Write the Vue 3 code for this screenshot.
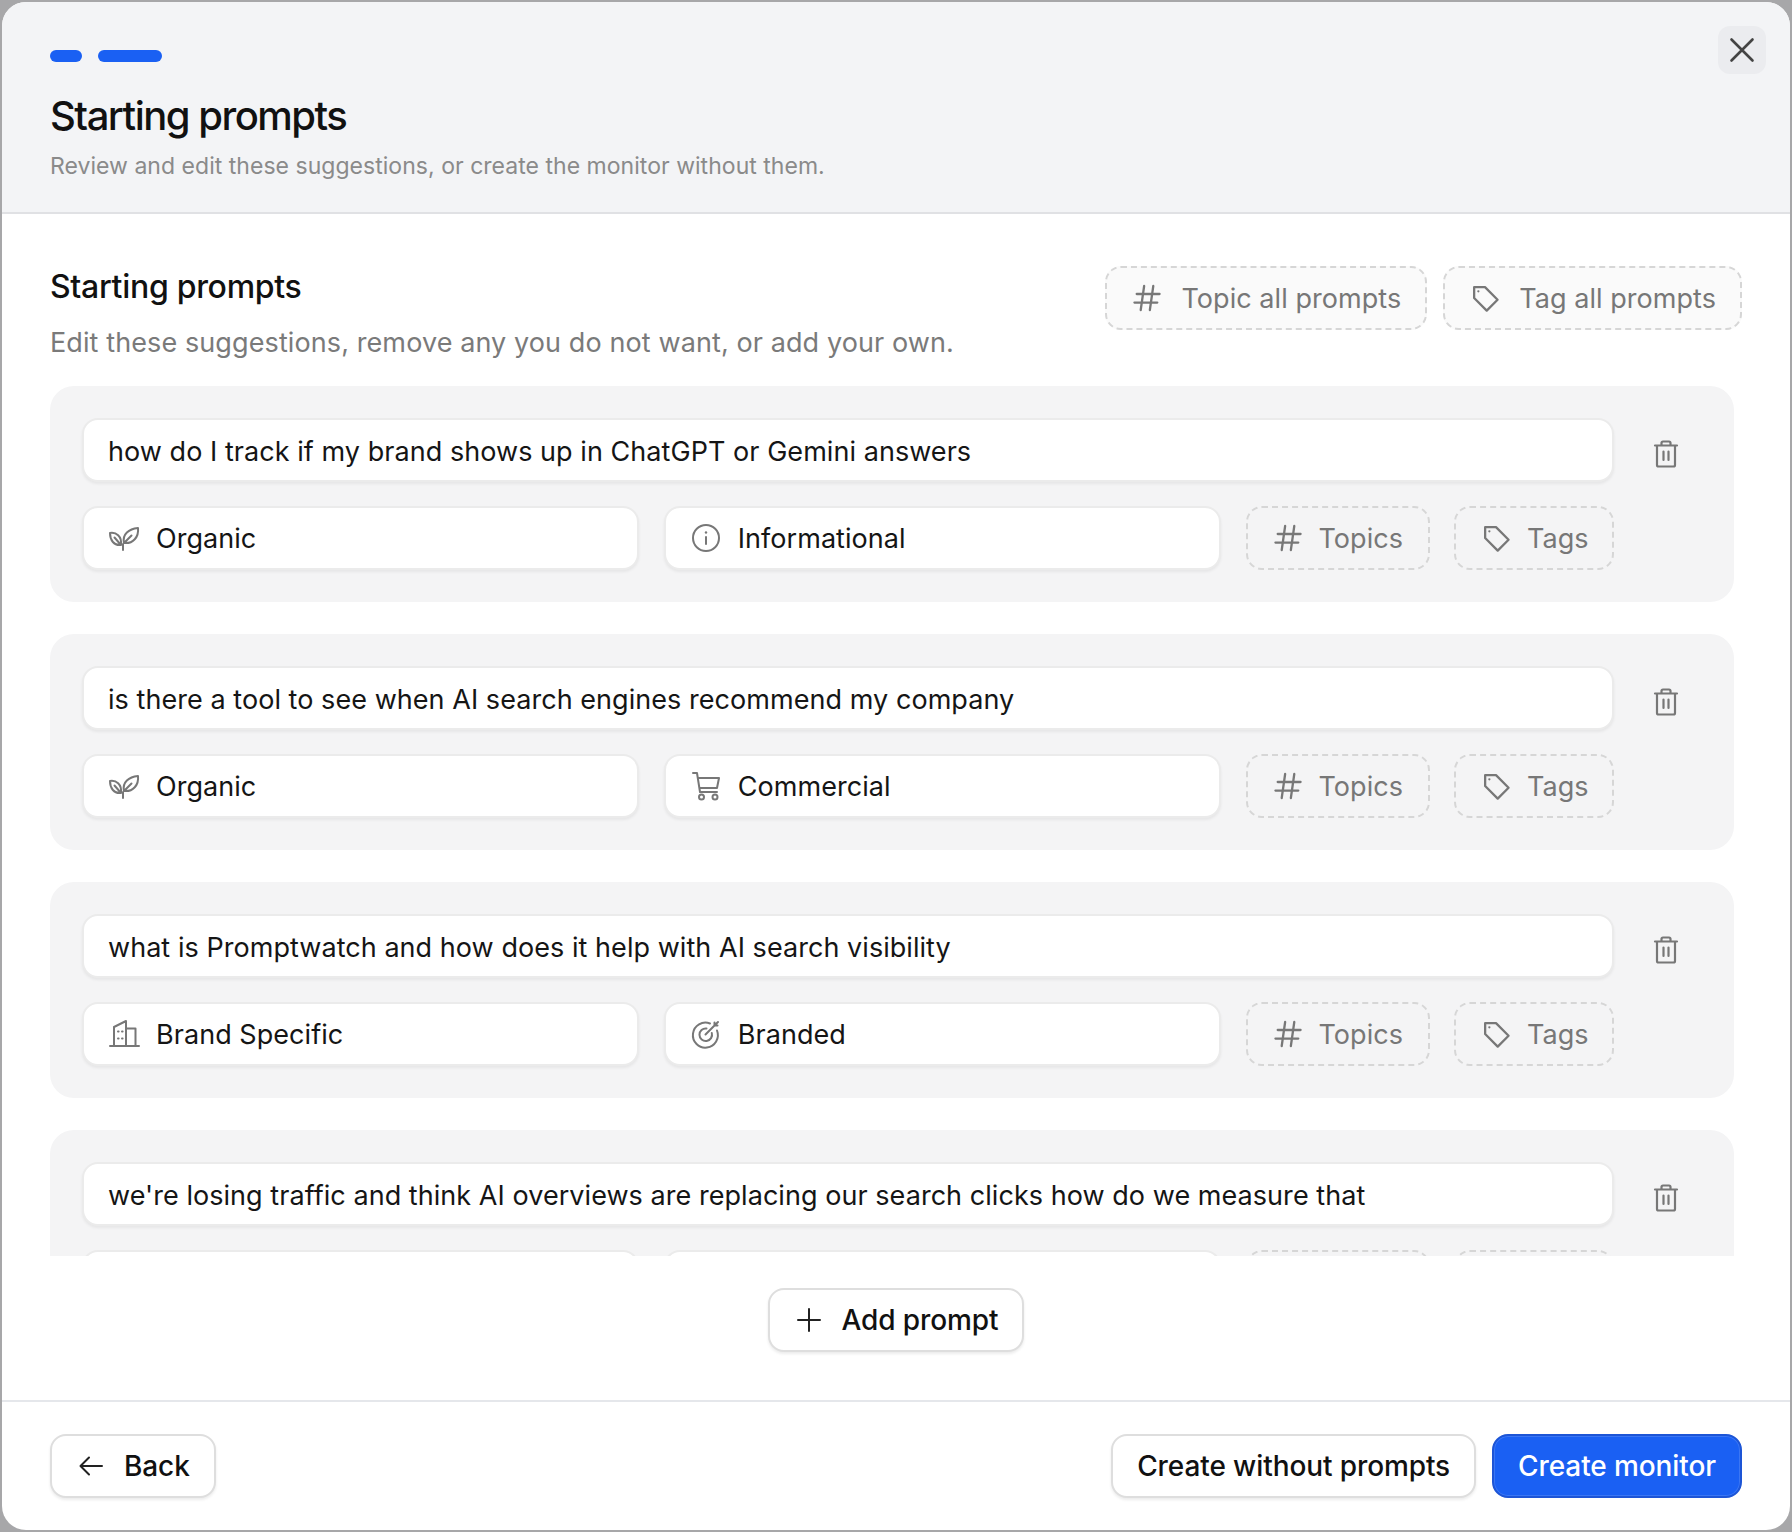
<template>
  <div class="modal">
    <header class="head">
      <div class="steps">
        <span class="step step-short"></span>
        <span class="step step-long"></span>
      </div>
      <h1 class="title">Starting prompts</h1>
      <p class="subtitle">Review and edit these suggestions, or create the monitor without them.</p>
      <button class="close">
        <svg width="26" height="26" viewBox="0 0 26 26" fill="none" stroke="#444" stroke-width="2.6" stroke-linecap="round">
          <path d="M2.500 2.500l21 21M23.500 2.500l-21 21" />
        </svg>
      </button>
    </header>

    <main class="body">
      <div class="section-head">
        <div>
          <h2 class="section-title">Starting prompts</h2>
          <p class="section-sub">Edit these suggestions, remove any you do not want, or add your own.</p>
        </div>
        <div class="section-actions">
          <button class="dashed dashed-light">
            <svg class="ico" viewBox="0 0 28 28"><path :d="hashPath" /></svg>
            Topic all prompts
          </button>
          <button class="dashed dashed-light">
            <svg class="ico" viewBox="0 0 28 28"><path :d="tagPath" /><circle cx="8.200" cy="8.200" r="1" fill="#777" stroke="none" /></svg>
            Tag all prompts
          </button>
        </div>
      </div>

      <div class="list">
        <div v-for="p in prompts" :key="p.text" class="card">
          <div class="row">
            <div class="field prompt">{{ p.text }}</div>
            <button class="trash">
              <svg width="28" height="30" viewBox="0 0 28 30" fill="none" stroke="#777" stroke-width="2.2" stroke-linejoin="round" stroke-linecap="round">
                <path d="M3 6.500h22M5 6.500v19.500a1.500 1.500 0 0 0 1.500 1.500h15a1.500 1.500 0 0 0 1.500-1.500V6.500M9.500 6.500V4a1.500 1.500 0 0 1 1.500-1.500h6A1.500 1.500 0 0 1 18.500 4v2.500M11.500 12.500v8.500M16.500 12.500v8.500" />
              </svg>
            </button>
          </div>
          <!-- fourth card is cut off by the scroll area, only the tops of its boxes show -->
          <div class="row-two">
            <div class="field select">
              <template v-if="p.source">
                <svg class="ico" viewBox="0 0 32 32">
                  <path v-if="p.source === 'Organic'" d="M16 21C14 12 21 7 30 6C31 15 25 22 16 21zM16 21L23.500 13.500M13 23C6 24 2 18 2 11C8 10 14 14 13 23zM6.500 15.500L13 23M15 28V22" />
                  <path v-else d="M2 28h29M6 28V9L18 3V28M18 10.500H27.500V28M10 13.500h.6M14 13.500h.6M10 20.500h.6M14 20.500h.6" />
                </svg>
                {{ p.source }}
              </template>
            </div>
            <div class="field select">
              <template v-if="p.intent">
                <svg class="ico" viewBox="0 0 32 32">
                  <template v-if="p.intent === 'Informational'">
                    <circle cx="16" cy="16" r="13" /><path d="M16 15v7" /><circle cx="16" cy="10.500" r="1.200" fill="#777" stroke="none" />
                  </template>
                  <template v-else-if="p.intent === 'Commercial'">
                    <path d="M3 3H7L10 22H27M8 8H29L27 18H9.500" /><circle cx="11.500" cy="27" r="2.500" /><circle cx="25" cy="27" r="2.500" />
                  </template>
                  <path v-else d="M27 12.500A12.500 12.500 0 1 1 20 5.500M21.800 15A6.300 6.300 0 1 1 16.500 10.500M15.500 16.500L28 4M24.500 4.500V7.500H27.500" />
                </svg>
                {{ p.intent }}
              </template>
            </div>
            <button class="dashed topics">
              <template v-if="p.source">
                <svg class="ico" viewBox="0 0 28 28"><path :d="hashPath" /></svg>
                Topics
              </template>
            </button>
            <button class="dashed tags">
              <template v-if="p.source">
                <svg class="ico" viewBox="0 0 28 28"><path :d="tagPath" /><circle cx="8.200" cy="8.200" r="1" fill="#777" stroke="none" /></svg>
                Tags
              </template>
            </button>
          </div>
        </div>
      </div>

      <div class="add-row">
        <button class="btn">
          <svg class="ico ico-dark" viewBox="0 0 28 28"><path d="M14 3v22M3 14h22" /></svg>
          Add prompt
        </button>
      </div>
    </main>

    <footer class="foot">
      <button class="btn">
        <svg class="ico ico-dark" viewBox="0 0 28 28"><path d="M25 14H4M12 5.500L3.500 14l8.500 8.500" /></svg>
        Back
      </button>
      <div class="foot-right">
        <button class="btn">Create without prompts</button>
        <button class="btn btn-primary">Create monitor</button>
      </div>
    </footer>
  </div>
</template>

<script setup>
const tagPath = 'M4.500 4.500h9.500L25 15.500 15.500 25 4.500 14z'
const hashPath = 'M5 10.500h20M3 18h20M11.500 3.500L8.500 24.500M19.500 3.500l-3 21'

const prompts = [
  { text: 'how do I track if my brand shows up in ChatGPT or Gemini answers', source: 'Organic', intent: 'Informational' },
  { text: 'is there a tool to see when AI search engines recommend my company', source: 'Organic', intent: 'Commercial' },
  { text: 'what is Promptwatch and how does it help with AI search visibility', source: 'Brand Specific', intent: 'Branded' },
  { text: "we're losing traffic and think AI overviews are replacing our search clicks how do we measure that", source: '', intent: '' }
]
</script>

<style>
html, body {
  margin: 0;
  background: #a7a7a9;
}
</style>

<style scoped>
.modal {
  box-sizing: border-box;
  width: 1788px;
  height: 1528px;
  margin: 2px;
  display: flex;
  flex-direction: column;
  overflow: hidden;
  background: #fff;
  border-radius: 24px;
  font-family: Inter, "Liberation Sans", sans-serif;
  color: #111;
}

.head {
  position: relative;
  box-sizing: border-box;
  height: 212px;
  padding: 48px 48px 0;
  background: #f3f4f6;
  border-bottom: 2px solid #e0e1e4;
}

.steps {
  display: flex;
  gap: 16px;
}

.step {
  height: 12px;
  border-radius: 6px;
  background: #1a60f3;
}

.step-short { width: 32px; }
.step-long { width: 64px; }

.title {
  margin: 26px 0 0;
  font-size: 40px;
  line-height: 56px;
  font-weight: 500;
  letter-spacing: -1.5px;
}

.subtitle {
  margin: 6px 0 0;
  font-size: 23px;
  line-height: 32px;
  letter-spacing: 0.03px;
  color: #8a8a8a;
}

.close {
  position: absolute;
  top: 24px;
  right: 24px;
  width: 48px;
  height: 48px;
  padding: 0;
  display: flex;
  align-items: center;
  justify-content: center;
  border: 0;
  border-radius: 12px;
  background: #ebecef;
}

.body {
  flex: 1;
  min-height: 0;
  display: flex;
  flex-direction: column;
  padding: 52px 48px 0;
}

.section-head {
  display: flex;
  justify-content: space-between;
  align-items: flex-start;
  height: 120px;
  flex-shrink: 0;
}

.section-title {
  margin: -1px 0 0;
  font-size: 32px;
  line-height: 44px;
  font-weight: 500;
  letter-spacing: -0.3px;
}

.section-sub {
  margin: 14px 0 0;
  font-size: 27px;
  line-height: 40px;
  letter-spacing: 0.1px;
  color: #7a7a7a;
}

.section-actions {
  display: flex;
  gap: 16px;
}

.list {
  flex: 1;
  min-height: 0;
  overflow: hidden;
  display: flex;
  flex-direction: column;
  gap: 32px;
  padding-right: 8px;
}

.card {
  flex-shrink: 0;
  padding: 32px;
  background: #f4f4f5;
  border-radius: 24px;
}

.row {
  display: flex;
  align-items: center;
  gap: 28px;
}

.row-two {
  display: flex;
  gap: 24.5px;
  margin-top: 24px;
  width: 1532px;
}

.field {
  box-sizing: border-box;
  height: 64px;
  display: flex;
  align-items: center;
  background: #fff;
  border: 2px solid #ebebeb;
  border-radius: 16px;
  box-shadow: 0 2px 3px rgba(0, 0, 0, 0.06);
  font-size: 27px;
  letter-spacing: 0.05px;
  color: #151515;
}

.prompt {
  width: 1532px;
  flex-shrink: 0;
  padding: 2px 24px 0;
}

.select {
  flex: 1;
  gap: 16px;
  padding: 0 24px;
}

.trash {
  width: 48px;
  height: 48px;
  margin-top: 7px;
  padding: 0;
  display: flex;
  align-items: center;
  justify-content: center;
  background: none;
  border: 0;
}

.dashed {
  box-sizing: border-box;
  height: 64px;
  display: flex;
  align-items: center;
  gap: 18px;
  padding: 0 24px;
  font: inherit;
  font-size: 27px;
  letter-spacing: 0.05px;
  white-space: nowrap;
  color: #777;
  background: transparent;
  border: 2px dashed #d6d6d6;
  border-radius: 16px;
}

.dashed-light {
  background: #fafafa;
}

.topics { width: 184px; flex-shrink: 0; gap: 15px; }
.tags { width: 160px; flex-shrink: 0; gap: 15px; }

.ico {
  width: 32px;
  height: 32px;
  flex-shrink: 0;
  fill: none;
  stroke: #777;
  stroke-width: 2;
  stroke-linecap: round;
  stroke-linejoin: round;
}

.ico-dark {
  width: 28px;
  height: 28px;
  stroke: #222;
}

.add-row {
  flex-shrink: 0;
  display: flex;
  justify-content: center;
  padding: 32px 0 48px;
}

.btn {
  box-sizing: border-box;
  height: 64px;
  display: flex;
  align-items: center;
  gap: 19px;
  padding: 0 24px 0 25px;
  font: inherit;
  font-size: 28px;
  font-weight: 500;
  letter-spacing: -0.1px;
  color: #111;
  background: #fff;
  border: 2px solid #dedede;
  border-radius: 16px;
  box-shadow: 0 2px 3px rgba(0, 0, 0, 0.08);
}

.btn-primary {
  color: #fff;
  background: #1a60f3;
  border-color: #1d55d6;
  box-shadow: inset 0 0 0 1px rgba(255, 255, 255, 0.14);
}

.foot {
  flex-shrink: 0;
  display: flex;
  justify-content: space-between;
  padding: 32px 48px 32px;
  border-top: 2px solid #e5e7eb;
}

.foot-right {
  display: flex;
  gap: 16px;
}

.foot-right .btn {
  padding: 0 24px;
}
</style>
